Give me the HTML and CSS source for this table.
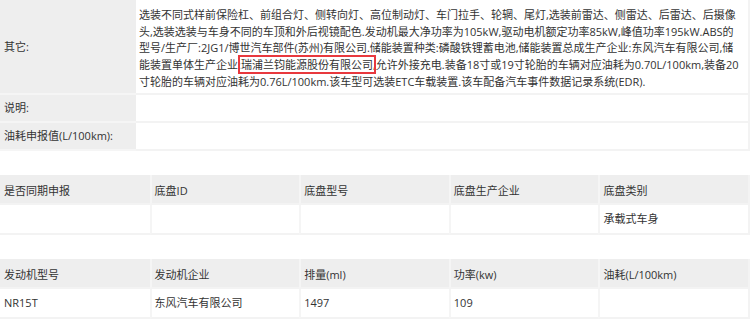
FILE: index.html
```html
<!DOCTYPE html>
<html lang="zh-CN">
<head>
<meta charset="utf-8">
<title>车辆参数</title>
<link rel="stylesheet" href="styles.css">
</head>
<body>
<div class="page">
  <div class="info">
    <div class="label">其它:</div>
    <div class="value long">选装不同式样前保险杠、前组合灯、侧转向灯、高位制动灯、车门拉手、轮辋、尾灯,选装前雷达、侧雷达、后雷达、后摄像<br>头,选装选装与车身不同的车顶和外后视镜配色.发动机最大净功率为105kW,驱动电机额定功率85kW,峰值功率195kW.ABS的<br>型号/生产厂:2JG1/博世汽车部件(苏州)有限公司.储能装置种类:磷酸铁锂蓄电池,储能装置总成生产企业:东风汽车有限公司,储<br>能装置单体生产企业<span class="mark">:瑞浦兰钧能源股份有限公司,</span>允许外接充电.装备18寸或19寸轮胎的车辆对应油耗为0.70L/100km,装备20<br>寸轮胎的车辆对应油耗为0.76L/100km.该车型可选装ETC车载装置.该车配备汽车事件数据记录系统(EDR).</div>
    <div class="label">说明:</div>
    <div class="value"></div>
    <div class="label">油耗申报值(L/100km):</div>
    <div class="value"></div>
  </div>

  <div class="grid5">
    <div class="head">是否同期申报</div>
    <div class="head">底盘ID</div>
    <div class="head">底盘型号</div>
    <div class="head">底盘生产企业</div>
    <div class="head">底盘类别</div>
    <div class="cell"></div>
    <div class="cell"></div>
    <div class="cell"></div>
    <div class="cell"></div>
    <div class="cell">承载式车身</div>
  </div>

  <div class="grid5">
    <div class="head">发动机型号</div>
    <div class="head">发动机企业</div>
    <div class="head">排量(ml)</div>
    <div class="head">功率(kw)</div>
    <div class="head">油耗(L/100km)</div>
    <div class="cell">NR15T</div>
    <div class="cell">东风汽车有限公司</div>
    <div class="cell">1497</div>
    <div class="cell">109</div>
    <div class="cell"></div>
  </div>
</div>
</body>
</html>
```

FILE: styles.css
```css
* { box-sizing: border-box; }

html, body {
  margin: 0;
  padding: 0;
  background: #ffffff;
}

body {
  font-family: "Open Sans", "Noto Sans CJK SC", sans-serif;
  font-size: 11px;
  color: #333333;
  width: 750px;
  overflow: hidden;
}

.page {
  display: flex;
  flex-direction: column;
  gap: 24px;
}

.info {
  display: grid;
  grid-template-columns: 136px minmax(0, 1fr);
  border-right: 2px solid #f3f3f3;
}

.label {
  background: #eeeeee;
  border-bottom: 2px solid #f5f5f5;
  padding: 1px 4px 0 4px;
  display: flex;
  align-items: center;
  min-height: 28px;
  line-height: 16px;
}

.value {
  border-bottom: 2px solid #f3f3f3;
  min-height: 28px;
  padding: 0 3px;
}

.value.long {
  padding: 7px 3px 2px 3px;
  line-height: 16.7px;
  min-height: 94px;
  white-space: nowrap;
  overflow: hidden;
}

.mark {
  padding: 2px 0;
  outline: 2px solid #e8393e;
  outline-offset: -2px;
}

.grid5 {
  display: grid;
  grid-template-columns: repeat(5, minmax(0, 1fr));
  border-right: 2px solid #f3f3f3;
}

.head,
.cell {
  height: 30px;
  line-height: 16px;
  border-left: 2px solid #f5f5f5;
  border-bottom: 2px solid #f3f3f3;
  white-space: nowrap;
}

.head {
  background: #eeeeee;
  padding: 8px 3px 6px 3px;
}

.cell {
  padding: 6px 3px 8px 3px;
}

.head:nth-child(5n+1),
.cell:nth-child(5n+1) {
  border-left: none;
  padding-left: 4px;
}
```
